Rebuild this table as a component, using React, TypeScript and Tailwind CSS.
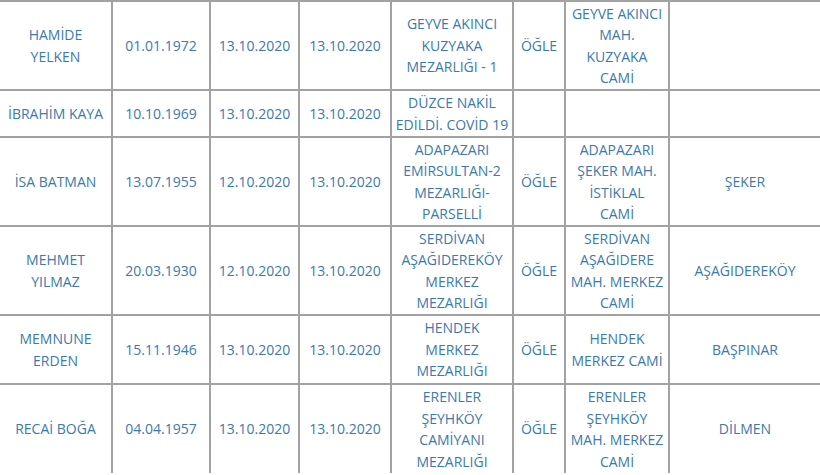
import React from 'react';

type Row = {
  name: string[];
  birth: string;
  death: string;
  burial: string;
  cemetery: string[];
  prayer: string;
  mosque: string[];
  district: string;
  h: string;
};

const rows: Row[] = [
  {
    name: ['HAMİDE', 'YELKEN'],
    birth: '01.01.1972',
    death: '13.10.2020',
    burial: '13.10.2020',
    cemetery: ['GEYVE AKINCI', 'KUZYAKA', 'MEZARLIĞI - 1'],
    prayer: 'ÖĞLE',
    mosque: ['GEYVE AKINCI', 'MAH.', 'KUZYAKA', 'CAMİ'],
    district: '',
    h: 'h-[89px]',
  },
  {
    name: ['İBRAHİM KAYA'],
    birth: '10.10.1969',
    death: '13.10.2020',
    burial: '13.10.2020',
    cemetery: ['DÜZCE NAKİL', 'EDİLDİ. COVİD 19'],
    prayer: '',
    mosque: [],
    district: '',
    h: 'h-[47px]',
  },
  {
    name: ['İSA BATMAN'],
    birth: '13.07.1955',
    death: '12.10.2020',
    burial: '13.10.2020',
    cemetery: ['ADAPAZARI', 'EMİRSULTAN-2', 'MEZARLIĞI-', 'PARSELLİ'],
    prayer: 'ÖĞLE',
    mosque: ['ADAPAZARI', 'ŞEKER MAH.', 'İSTİKLAL', 'CAMİ'],
    district: 'ŞEKER',
    h: 'h-[89px]',
  },
  {
    name: ['MEHMET', 'YILMAZ'],
    birth: '20.03.1930',
    death: '12.10.2020',
    burial: '13.10.2020',
    cemetery: ['SERDİVAN', 'AŞAĞIDEREKÖY', 'MERKEZ', 'MEZARLIĞI'],
    prayer: 'ÖĞLE',
    mosque: ['SERDİVAN', 'AŞAĞIDERE', 'MAH. MERKEZ', 'CAMİ'],
    district: 'AŞAĞIDEREKÖY',
    h: 'h-[89px]',
  },
  {
    name: ['MEMNUNE', 'ERDEN'],
    birth: '15.11.1946',
    death: '13.10.2020',
    burial: '13.10.2020',
    cemetery: ['HENDEK', 'MERKEZ', 'MEZARLIĞI'],
    prayer: 'ÖĞLE',
    mosque: ['HENDEK', 'MERKEZ CAMİ'],
    district: 'BAŞPINAR',
    h: 'h-[69px]',
  },
  {
    name: ['RECAİ BOĞA'],
    birth: '04.04.1957',
    death: '13.10.2020',
    burial: '13.10.2020',
    cemetery: ['ERENLER', 'ŞEYHKÖY', 'CAMİYANI', 'MEZARLIĞI'],
    prayer: 'ÖĞLE',
    mosque: ['ERENLER', 'ŞEYHKÖY', 'MAH. MERKEZ', 'CAMİ'],
    district: 'DİLMEN',
    h: 'h-[89px]',
  },
];

function Lines({ lines }: { lines: string[] }) {
  return (
    <>
      {lines.map((l, i) => (
        <React.Fragment key={i}>
          {i > 0 && <br />}
          {l}
        </React.Fragment>
      ))}
    </>
  );
}

const cell = 'border-2 border-[#a2a2a2] px-[1px] py-0 text-center align-middle whitespace-nowrap';

export default function App() {
  return (
    <div className="w-[820px] h-[475px] overflow-hidden bg-white">
      <table
        className="table-fixed border-collapse w-[822px] -ml-[2px] text-[#3a79b1] text-[14px] leading-[21.5px]"
        style={{ fontFamily: '"Open Sans", Arial, sans-serif' }}
      >
        <colgroup>
          <col className="w-[113px]" />
          <col className="w-[98px]" />
          <col className="w-[89px]" />
          <col className="w-[92px]" />
          <col className="w-[122px]" />
          <col className="w-[52px]" />
          <col className="w-[104px]" />
          <col className="w-[152px]" />
        </colgroup>
        <tbody>
          {rows.map((r, i) => (
            <tr key={i} className={`${r.h} last:[&>td]:border-b-0`}>
              <td className={cell}>
                <Lines lines={r.name} />
              </td>
              <td className={cell}>{r.birth}</td>
              <td className={cell}>{r.death}</td>
              <td className={cell}>{r.burial}</td>
              <td className={cell}>
                <Lines lines={r.cemetery} />
              </td>
              <td className={cell}>{r.prayer}</td>
              <td className={cell}>
                <Lines lines={r.mosque} />
              </td>
              <td className={cell}>{r.district}</td>
            </tr>
          ))}
        </tbody>
      </table>
    </div>
  );
}
